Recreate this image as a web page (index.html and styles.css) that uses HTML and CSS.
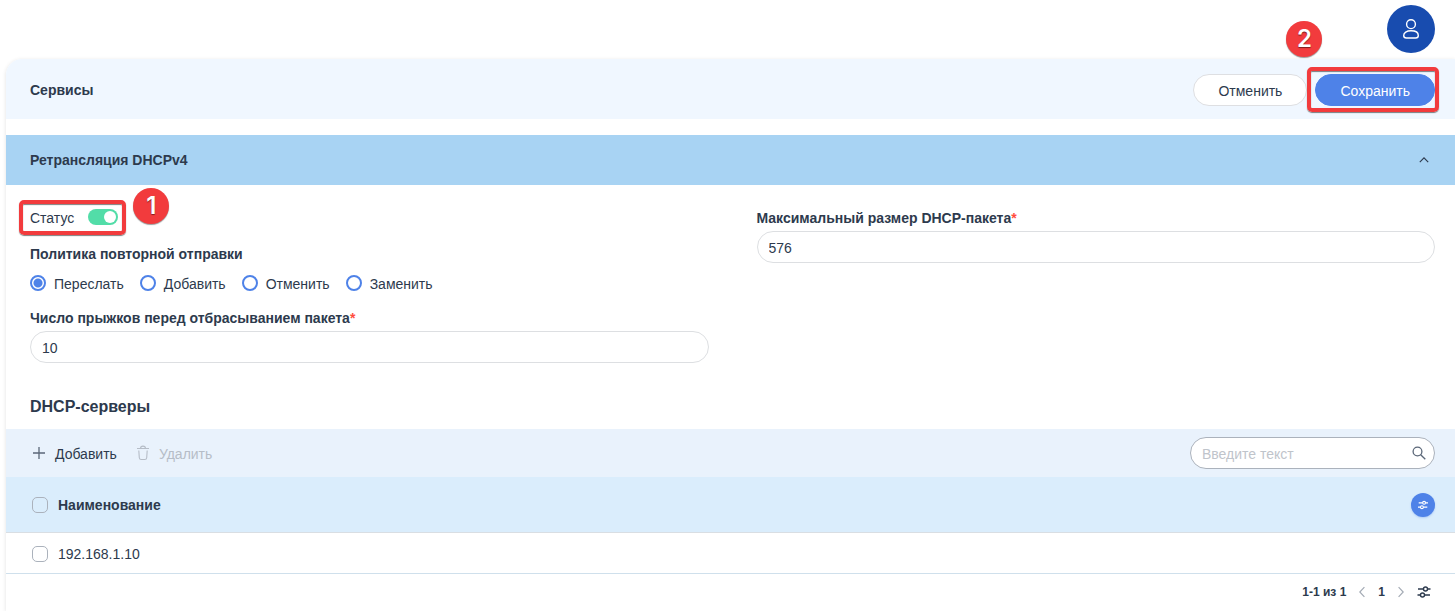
FILE: index.html
```html
<!DOCTYPE html>
<html lang="ru">
<head>
    <meta charset="UTF-8">
    <meta name="viewport" content="width=device-width, initial-scale=1.0">
    <title>Сервисы</title>
    <link rel="stylesheet" href="styles.css">
</head>
<body>

<header class="topbar">
    <button type="button" class="avatar" aria-label="Профиль">
        <svg width="24" height="24" viewBox="0 0 24 24" fill="none" stroke="currentColor" stroke-width="1.4">
            <circle cx="12" cy="7.2" r="4.4"/>
            <path d="M12 13.8c-4.400 0-7.300 1.800-7.300 4.700 0 1.700 1 2.500 2.700 2.500h9.200c1.700 0 2.700-.8 2.700-2.500 0-2.900-2.900-4.700-7.300-4.700z"/>
        </svg>
    </button>
</header>

<main class="panel">
    <div class="panel-header">
        <h1>Сервисы</h1>
        <div class="actions">
            <button type="button" class="btn">Отменить</button>
            <div class="marked marked-save">
                <button type="button" class="btn btn-primary">Сохранить</button>
                <span class="step">2</span>
            </div>
        </div>
    </div>

    <button type="button" class="accordion" aria-expanded="true">
        <span>Ретрансляция DHCPv4</span>
        <svg width="10" height="10" viewBox="0 0 10 10" fill="none" stroke="currentColor" stroke-width="1.1">
            <path d="M.8 7.2L5 2.8l4.2 4.4"/>
        </svg>
    </button>

    <form class="settings">
        <div class="column">
            <div class="marked marked-status">
                <label class="status" for="status">Статус
                    <input type="checkbox" class="switch" id="status" checked>
                </label>
                <span class="step">1</span>
            </div>

            <fieldset class="policy">
                <legend>Политика повторной отправки</legend>
                <div class="radios">
                    <label><input type="radio" name="policy" checked>Переслать</label>
                    <label><input type="radio" name="policy">Добавить</label>
                    <label><input type="radio" name="policy">Отменить</label>
                    <label><input type="radio" name="policy">Заменить</label>
                </div>
            </fieldset>

            <div class="field">
                <label for="hops">Число прыжков перед отбрасыванием пакета<span class="required">*</span></label>
                <input type="text" id="hops" value="10">
            </div>
        </div>

        <div class="column">
            <div class="field">
                <label for="packetSize">Максимальный размер DHCP-пакета<span class="required">*</span></label>
                <input type="text" id="packetSize" value="576">
            </div>
        </div>
    </form>

    <h2>DHCP-серверы</h2>

    <div class="toolbar">
        <button type="button" class="tool">
            <svg width="18" height="18" viewBox="0 0 18 18" fill="none" stroke="#5b6778" stroke-width="1.3">
                <path d="M9 3v12M3 9h12"/>
            </svg>
            <span>Добавить</span>
        </button>
        <button type="button" class="tool" disabled>
            <svg width="18" height="18" viewBox="0 0 18 18" fill="none" stroke="currentColor" stroke-width="1.1">
                <path d="M3 4.500h12M6.500 4.500c0-1.600.8-2.400 2.500-2.400s2.500.8 2.500 2.400M4.800 6.500l.5 7.200c.1 1.200.7 1.800 1.900 1.800h3.600c1.200 0 1.800-.6 1.900-1.800l.5-7.200"/>
            </svg>
            <span>Удалить</span>
        </button>
        <div class="search">
            <input type="search" placeholder="Введите текст" aria-label="Поиск">
            <svg width="14" height="14" viewBox="0 0 14 14" fill="none" stroke="currentColor" stroke-width="1.3">
                <circle cx="5.5" cy="5.5" r="4.4"/>
                <path d="M8.700 8.700l4.600 4.600"/>
            </svg>
        </div>
    </div>

    <table class="servers">
        <thead>
            <tr>
                <th class="check"><input type="checkbox" aria-label="Выбрать все"></th>
                <th>Наименование</th>
                <th class="config">
                    <button type="button" class="round" aria-label="Настроить столбцы">
                        <svg width="10" height="10" viewBox="0 0 14 14" fill="none" stroke="currentColor" stroke-width="1.6">
                            <path d="M1 4h5.500M10.500 4H14M0 10h3.500M7.500 10H13"/>
                            <circle cx="8.5" cy="4" r="2"/>
                            <circle cx="5.5" cy="10" r="2"/>
                        </svg>
                    </button>
                </th>
            </tr>
        </thead>
        <tbody>
            <tr>
                <td class="check"><input type="checkbox" aria-label="Выбрать 192.168.1.10"></td>
                <td>192.168.1.10</td>
                <td></td>
            </tr>
        </tbody>
    </table>

    <div class="pager">
        <span>1-1 из 1</span>
        <button type="button" class="arrow" aria-label="Назад">
            <svg width="6" height="12" viewBox="0 0 6 12" fill="none" stroke="currentColor" stroke-width="1.2"><path d="M5.400 1.200L.8 6l4.600 4.800"/></svg>
        </button>
        <span>1</span>
        <button type="button" class="arrow" aria-label="Вперёд">
            <svg width="6" height="12" viewBox="0 0 6 12" fill="none" stroke="currentColor" stroke-width="1.2"><path d="M.6 1.200L5.200 6 .6 10.800"/></svg>
        </button>
        <button type="button" aria-label="Настройки">
            <svg width="14" height="14" viewBox="0 0 14 14" fill="none" stroke="currentColor" stroke-width="1.4">
                <path d="M1 4h5.500M10.500 4H13.500M.5 10h3M7.500 10H13"/>
                <circle cx="8.5" cy="4" r="2"/>
                <circle cx="5.5" cy="10" r="2"/>
            </svg>
        </button>
    </div>
</main>

</body>
</html>
```
FILE: styles.css
```css
* {
    box-sizing: border-box;
}
body {
    font-family: 'Liberation Sans', Arial, sans-serif;
    font-size: 14px;
    line-height: 18px;
    background-color: #FFFFFF;
    color: #2D3A4D;
    margin: 0;
}
button, input {
    font: inherit;
    color: inherit;
    margin: 0;
}
button {
    background: none;
    border: none;
    padding: 0;
    cursor: pointer;
}
svg {
    display: block;
    flex: none;
}
.topbar {
    display: flex;
    justify-content: flex-end;
    padding: 5px 20px 6px;
}
.avatar {
    display: flex;
    align-items: center;
    justify-content: center;
    width: 48px;
    height: 48px;
    border-radius: 50%;
    background-color: #184CAF;
    color: #FFFFFF;
}
.panel {
    margin-left: 6px;
    border-top-left-radius: 16px;
    box-shadow: 0 1px 4px rgba(0, 0, 0, 0.12);
}
.panel-header {
    display: flex;
    align-items: center;
    justify-content: space-between;
    height: 60px;
    padding: 2px 20px 0 24px;
    margin-bottom: 16px;
    border-top-left-radius: 16px;
    background-color: #F0F7FF;
}
h1 {
    margin: 0;
    font-size: 14px;
}
.actions {
    display: flex;
    gap: 8px;
}
.btn {
    height: 32px;
    padding: 2px 24px 0;
    border: 1px solid #DEDFE2;
    border-radius: 16px;
    background-color: #FFFFFF;
}
.btn-primary {
    border-color: #4E82E8;
    background-color: #4E82E8;
    color: #FFFFFF;
}

/* красная рамка и номер шага */
.marked {
    position: relative;
}
.marked::after {
    content: "";
    position: absolute;
    border: 4px solid #F23B3D;
    border-radius: 5px;
    box-shadow: 0 1px 1px rgba(0, 0, 0, 0.5), inset 0 1px 1px rgba(0, 0, 0, 0.5);
    pointer-events: none;
}
.marked-save::after {
    inset: -7px -4px -6px -8px;
}
.marked-status::after {
    inset: -9px -8px -8px -11px;
}
.step {
    position: absolute;
    width: 36px;
    height: 36px;
    border-radius: 50%;
    background-color: #F23B3D;
    box-shadow: 0 1px 1px rgba(0, 0, 0, 0.4);
    color: #FFFFFF;
    font-family: Inter, sans-serif;
    font-size: 24px;
    font-weight: 600;
    line-height: 36px;
    text-align: center;
    text-shadow: 0 1px 1px rgba(0, 0, 0, 0.5);
}
.marked-save .step {
    top: -53px;
    left: -29px;
}
.marked-status .step {
    top: -21px;
    right: -51px;
}

.accordion {
    display: flex;
    align-items: center;
    justify-content: space-between;
    width: 100%;
    height: 50px;
    padding: 0 26px 0 24px;
    background-color: #A8D3F3;
    font-weight: 700;
}
.settings {
    display: grid;
    grid-template-columns: 1fr 1fr;
    gap: 48px;
    padding: 24px 20px 0 24px;
}
.column {
    display: flex;
    flex-direction: column;
    align-items: stretch;
}
.marked-status {
    align-self: flex-start;
    margin-bottom: 18px;
}
.status {
    display: flex;
    gap: 14px;
}
.switch {
    appearance: none;
    display: flex;
    justify-content: flex-end;
    width: 30px;
    height: 16px;
    padding: 2px;
    border-radius: 8px;
    background-color: #52DDA8;
}
.switch::before {
    content: "";
    width: 12px;
    height: 12px;
    border-radius: 50%;
    background-color: #FFFFFF;
}
.switch:not(:checked) {
    justify-content: flex-start;
    background-color: #B4BAC3;
}
.policy {
    border: none;
    margin: 0 0 16px;
    padding: 0;
}
.policy legend {
    padding: 0;
    margin-bottom: 12px;
    font-weight: 700;
}
.radios {
    display: flex;
    gap: 16px;
}
.radios label {
    display: flex;
    gap: 8px;
}
.radios input {
    appearance: none;
    width: 16px;
    height: 16px;
    border: 2px solid #4E82E8;
    border-radius: 50%;
}
.radios input:checked {
    background: radial-gradient(circle, #4E82E8 4px, #FFFFFF 5px);
}
.field {
    display: flex;
    flex-direction: column;
    gap: 4px;
}
.field label {
    font-weight: 700;
}
.required {
    color: #FF4D3D;
}
.field input {
    width: 100%;
    height: 32px;
    padding: 2px 11px 0;
    border: 1px solid #DDDFE2;
    border-radius: 16px;
    background-color: #FFFFFF;
}
h2 {
    margin: 34px 24px 12px;
    font-size: 16px;
    line-height: 20px;
}
.toolbar {
    display: flex;
    align-items: center;
    gap: 17px;
    height: 48px;
    padding: 0 20px 0 24px;
    background-color: #E9F2FC;
}
.tool {
    display: flex;
    align-items: center;
    gap: 7px;
}
.tool span {
    padding-top: 2px;
}
.tool:disabled {
    color: #B6BDC7;
    cursor: default;
}
.search {
    display: flex;
    align-items: center;
    width: 245px;
    height: 32px;
    margin-left: auto;
    padding: 0 8px 0 11px;
    border: 1px solid #ABB2BC;
    border-radius: 16px;
    background-color: #FFFFFF;
    color: #5B6778;
}
.search input {
    flex: 1;
    min-width: 0;
    padding: 2px 0 0;
    border: none;
    outline: none;
    background: none;
}
.search input::placeholder {
    color: #BFC4CB;
}
.servers {
    width: 100%;
    border-spacing: 0;
    text-align: left;
}
.servers th {
    height: 56px;
    padding: 1px 0 0;
    border-bottom: 1px solid #D9DEE3;
    background-color: #DAEDFC;
}
.servers td {
    height: 41px;
    padding: 2px 0 0;
    border-bottom: 1px solid #CFE0EC;
}
.servers .check {
    width: 52px;
    padding: 1px 0 0 26px;
}
.check input {
    appearance: none;
    display: block;
    width: 16px;
    height: 16px;
    border: 1px solid #ABB2BC;
    border-radius: 5px;
}
.servers .config {
    width: 44px;
    padding-right: 20px;
}
.round {
    display: flex;
    align-items: center;
    justify-content: center;
    width: 24px;
    height: 24px;
    border-radius: 50%;
    background-color: #4E82E8;
    box-shadow: 0 1px 2px rgba(78, 130, 232, 0.3);
    color: #FFFFFF;
}
.pager {
    display: flex;
    align-items: center;
    justify-content: flex-end;
    gap: 13px;
    height: 37px;
    padding: 0 24px 2px;
    font-size: 12px;
    font-weight: 700;
}
.arrow {
    color: #A4ABB5;
}
```
